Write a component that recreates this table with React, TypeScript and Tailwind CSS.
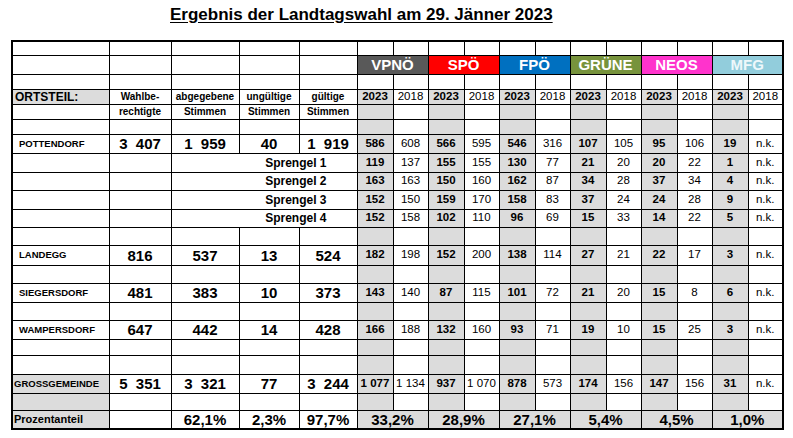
import { Fragment } from "react";

type Pair = [string, string];

const parties = [
  { name: "VPNÖ", cls: "bg-[#595959] text-white" },
  { name: "SPÖ", cls: "bg-[#ff0000] text-white" },
  { name: "FPÖ", cls: "bg-[#0070c0] text-white" },
  { name: "GRÜNE", cls: "bg-[#77933c] text-white" },
  { name: "NEOS", cls: "bg-[#ff33cc] text-white" },
  { name: "MFG", cls: "bg-[#92cddc] text-[#eef8fb]" },
];

const cell = "border border-black p-0 leading-none text-center whitespace-nowrap";
const grey = "bg-[#dcdcdc]";

function PartyCells({ vals, shade = true }: { vals?: Pair[]; shade?: boolean }) {
  const rows: Pair[] = vals ?? parties.map(() => ["", ""]);
  return (
    <>
      {rows.map(([a, b], i) => (
        <Fragment key={i}>
          <td className={`${cell} ${shade ? grey : ""} font-bold text-[11.5px]`}>{a}</td>
          <td className={`${cell} text-[11.5px]`}>{b}</td>
        </Fragment>
      ))}
    </>
  );
}

function EmptyLeft({ firstGrey = false }: { firstGrey?: boolean }) {
  return (
    <>
      <td className={`${cell} ${firstGrey ? grey : ""}`} />
      <td className={cell} />
      <td className={cell} />
      <td className={cell} />
      <td className={cell} />
    </>
  );
}

type Place = {
  name: string;
  nums: [string, string, string, string];
  vals: Pair[];
  h: string;
  pad: string;
  shadeName?: boolean;
};

function PlaceRow({ p }: { p: Place }) {
  return (
    <tr className={p.h}>
      <td className={`${cell} ${p.pad} ${p.shadeName ? grey : ""} text-left font-bold text-[9.5px]`}>{p.name}</td>
      {p.nums.map((n, i) => (
        <td key={i} className={`${cell} font-bold text-[15px]`}>
          {n}
        </td>
      ))}
      <PartyCells vals={p.vals} />
    </tr>
  );
}

const nk = "n.k.";

// thousands separator in the sheet is a wide space
const pottendorf: Place = {
  name: "POTTENDORF",
  nums: ["3\u2007407", "1\u2007959", "40", "1\u2007919"],
  vals: [["586", "608"], ["566", "595"], ["546", "316"], ["107", "105"], ["95", "106"], ["19", nk]],
  h: "h-[19px]",
  pad: "pl-[6px]",
};

const sprengel: { name: string; vals: Pair[]; h: string }[] = [
  { name: "Sprengel 1", vals: [["119", "137"], ["155", "155"], ["130", "77"], ["21", "20"], ["20", "22"], ["1", nk]], h: "h-[19px]" },
  { name: "Sprengel 2", vals: [["163", "163"], ["150", "160"], ["162", "87"], ["34", "28"], ["37", "34"], ["4", nk]], h: "h-[18px]" },
  { name: "Sprengel 3", vals: [["152", "150"], ["159", "170"], ["158", "83"], ["37", "24"], ["24", "28"], ["9", nk]], h: "h-[19px]" },
  { name: "Sprengel 4", vals: [["152", "158"], ["102", "110"], ["96", "69"], ["15", "33"], ["14", "22"], ["5", nk]], h: "h-[18px]" },
];

const landegg: Place = {
  name: "LANDEGG",
  nums: ["816", "537", "13", "524"],
  vals: [["182", "198"], ["152", "200"], ["138", "114"], ["27", "21"], ["22", "17"], ["3", nk]],
  h: "h-[20px]",
  pad: "pl-[6px]",
};

const siegersdorf: Place = {
  name: "SIEGERSDORF",
  nums: ["481", "383", "10", "373"],
  vals: [["143", "140"], ["87", "115"], ["101", "72"], ["21", "20"], ["15", "8"], ["6", nk]],
  h: "h-[19px]",
  pad: "pl-[6px]",
};

const wampersdorf: Place = {
  name: "WAMPERSDORF",
  nums: ["647", "442", "14", "428"],
  vals: [["166", "188"], ["132", "160"], ["93", "71"], ["19", "10"], ["15", "25"], ["3", nk]],
  h: "h-[19px]",
  pad: "pl-[6px]",
};

const gross: Place = {
  name: "GROSSGEMEINDE",
  nums: ["5\u2007351", "3\u2007321", "77", "3\u2007244"],
  vals: [["1 077", "1 134"], ["937", "1 070"], ["878", "573"], ["174", "156"], ["147", "156"], ["31", nk]],
  h: "h-[19px]",
  pad: "pl-[1px]",
  shadeName: true,
};

const percents = ["33,2%", "28,9%", "27,1%", "5,4%", "4,5%", "1,0%"];

function EmptyRow({ h, firstGrey = false }: { h: string; firstGrey?: boolean }) {
  return (
    <tr className={h}>
      <EmptyLeft firstGrey={firstGrey} />
      <PartyCells />
    </tr>
  );
}

export default function App() {
  const partyCols = [36, 35, 36, 35, 36, 35, 36, 35, 36, 35, 36, 35];

  return (
    <div className="w-[793px] h-[438px] bg-white font-['Liberation_Sans',Arial,sans-serif] text-black">
      <div className="h-[40px] pl-[170px] pt-[5px]">
        <h1 className="text-[17px] leading-[20px] font-bold underline underline-offset-2">
          Ergebnis der Landtagswahl am 29. Jänner 2023
        </h1>
      </div>

      <div className="pl-[11px]">
        <table className="table-fixed border-collapse border-2 border-black w-[771px]">
          <colgroup>
            <col className="w-[97px]" />
            <col className="w-[62px]" />
            <col className="w-[68px]" />
            <col className="w-[60px]" />
            <col className="w-[58px]" />
            {partyCols.map((w, i) => (
              <col key={i} style={{ width: w }} />
            ))}
          </colgroup>
          <tbody>
            <tr className="h-[14px]">
              <EmptyLeft />
              <PartyCells shade={false} />
            </tr>
            <tr className="h-[19px]">
              <EmptyLeft />
              {parties.map((p) => (
                <td key={p.name} colSpan={2} className={`${cell} ${p.cls} font-bold text-[15px]`}>
                  {p.name}
                </td>
              ))}
            </tr>
            <tr className="h-[15px]">
              <EmptyLeft />
              <PartyCells shade={false} />
            </tr>
            <tr className="h-[15px]">
              <td className={`${cell} ${grey} text-left pl-[2px] font-bold text-[12px]`}>ORTSTEIL:</td>
              <td className={`${cell} font-bold text-[10px]`}>Wahlbe-</td>
              <td className={`${cell} font-bold text-[10px]`}>abgegebene</td>
              <td className={`${cell} font-bold text-[10px]`}>ungültige</td>
              <td className={`${cell} font-bold text-[10px]`}>gültige</td>
              {parties.map((p) => (
                <Fragment key={p.name}>
                  <td className={`${cell} ${grey} font-bold text-[11.5px]`}>2023</td>
                  <td className={`${cell} text-[11.5px]`}>2018</td>
                </Fragment>
              ))}
            </tr>
            <tr className="h-[15px]">
              <td className={cell} />
              <td className={`${cell} font-bold text-[10px]`}>rechtigte</td>
              <td className={`${cell} font-bold text-[10px]`}>Stimmen</td>
              <td className={`${cell} font-bold text-[10px]`}>Stimmen</td>
              <td className={`${cell} font-bold text-[10px]`}>Stimmen</td>
              <PartyCells />
            </tr>
            <EmptyRow h="h-[15px]" />

            <PlaceRow p={pottendorf} />
            {sprengel.map((s) => (
              <tr key={s.name} className={s.h}>
                <td className={cell} />
                <td className={cell} />
                <td colSpan={3} className={`${cell} text-right pr-[30px] font-bold text-[12px]`}>
                  {s.name}
                </td>
                <PartyCells vals={s.vals} />
              </tr>
            ))}
            <EmptyRow h="h-[18px]" />

            <PlaceRow p={landegg} />
            <EmptyRow h="h-[18px]" />
            <PlaceRow p={siegersdorf} />
            <EmptyRow h="h-[18px]" />
            <PlaceRow p={wampersdorf} />
            <EmptyRow h="h-[16px]" />
            <EmptyRow h="h-[19px]" />
            <PlaceRow p={gross} />
            <EmptyRow h="h-[17px]" firstGrey />

            <tr className="h-[19px]">
              <td className={`${cell} ${grey} text-left pl-[1px] font-bold text-[11px]`}>Prozentanteil</td>
              <td className={cell} />
              <td className={`${cell} font-bold text-[15px]`}>62,1%</td>
              <td className={`${cell} font-bold text-[15px]`}>2,3%</td>
              <td className={`${cell} font-bold text-[15px]`}>97,7%</td>
              {percents.map((v) => (
                <td key={v} colSpan={2} className={`${cell} ${grey} font-bold text-[15px]`}>
                  {v}
                </td>
              ))}
            </tr>
          </tbody>
        </table>
      </div>
    </div>
  );
}
